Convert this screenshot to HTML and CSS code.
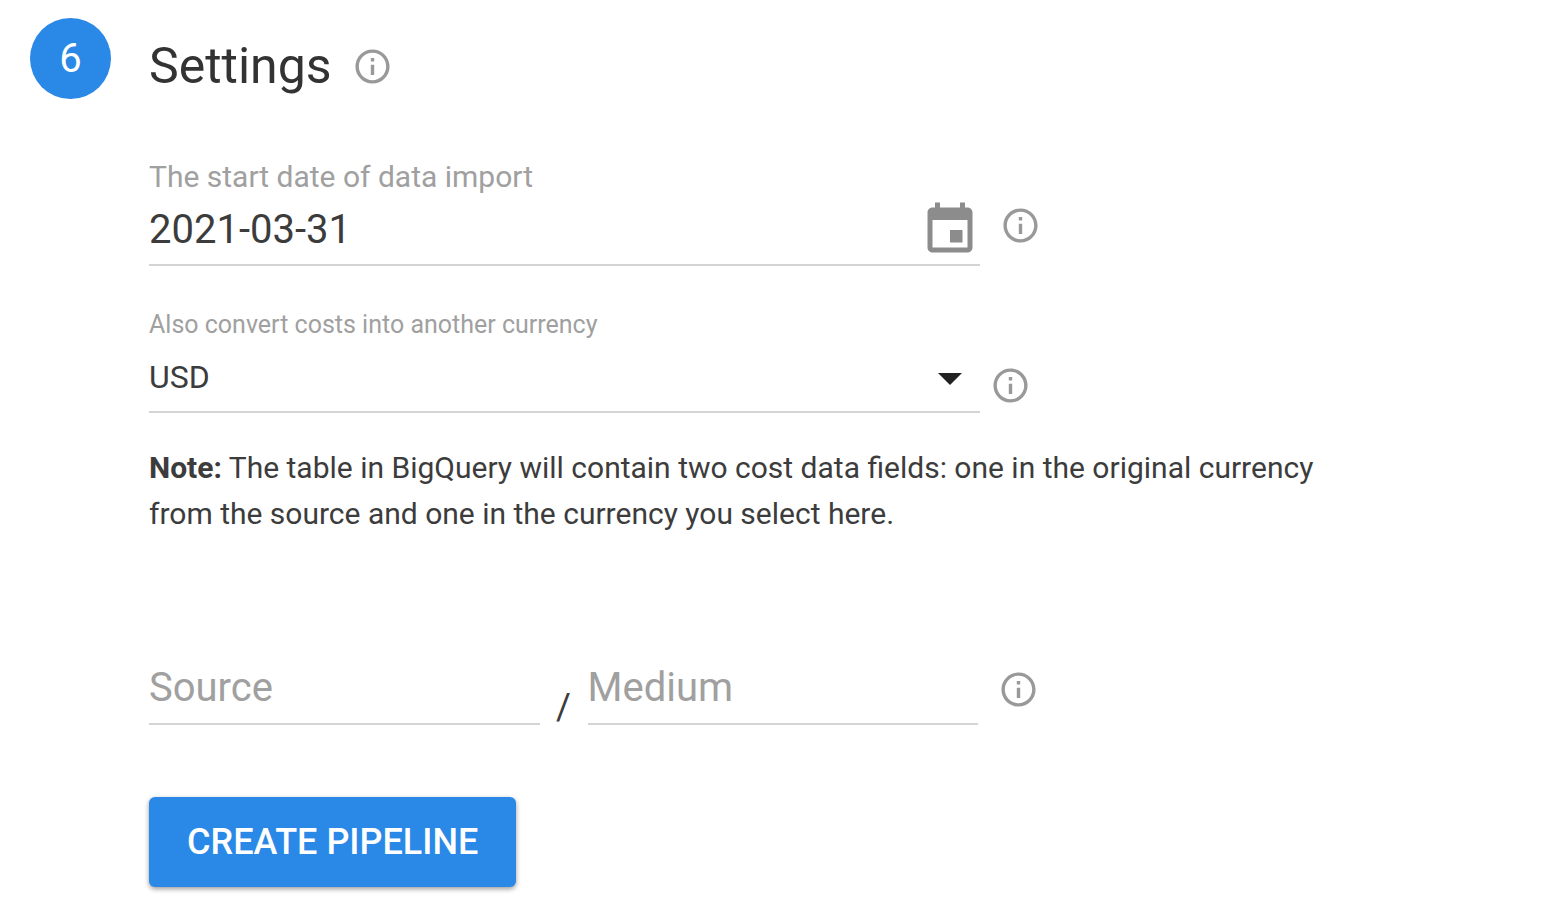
FILE: index.html
```html
<!DOCTYPE html>
<html lang="en">

<head>
    <meta charset="UTF-8">
    <meta name="viewport" content="width=device-width, initial-scale=1.0">
    <title>Settings</title>
    <link rel="stylesheet" href="styles.css">
</head>

<body>
    <!-- Shared info icon -->
    <svg class="symbols" aria-hidden="true">
        <symbol id="info" viewBox="0 0 24 24">
            <path d="M11 17h2v-6h-2v6zm1-15C6.48 2 2 6.48 2 12s4.48 10 10 10 10-4.48 10-10S17.52 2 12 2zm0 18c-4.41 0-8-3.59-8-8s3.59-8 8-8 8 3.59 8 8-3.59 8-8 8zM11 9h2V7h-2v2z" />
        </symbol>
    </svg>

    <main class="step">
        <div class="step-number">6</div>
        <form class="settings">
            <div class="title-row">
                <h2>Settings</h2>
                <button type="button" class="info-btn" aria-label="About settings"><svg><use href="#info" /></svg></button>
            </div>

            <div class="field-row date-row">
                <div class="field">
                    <label for="startDate">The start date of data import</label>
                    <div class="control">
                        <input type="text" id="startDate" name="startDate" value="2021-03-31">
                        <button type="button" class="calendar-btn" aria-label="Choose date">
                            <svg viewBox="0 0 24 24">
                                <path d="M17 12h-5v5h5v-5zM16 1v2H8V1H6v2H5c-1.11 0-1.99.9-1.99 2L3 19c0 1.1.89 2 2 2h14c1.1 0 2-.9 2-2V5c0-1.1-.9-2-2-2h-1V1h-2zm3 18H5V8h14v11z" />
                            </svg>
                        </button>
                    </div>
                </div>
                <button type="button" class="info-btn" aria-label="About the start date"><svg><use href="#info" /></svg></button>
            </div>

            <div class="field-row currency-row">
                <div class="field">
                    <label for="currency">Also convert costs into another currency</label>
                    <div class="control">
                        <select id="currency" name="currency">
                            <option>USD</option>
                        </select>
                        <svg class="arrow" viewBox="0 0 24 12"><path d="M0 0h24L12 12z" /></svg>
                    </div>
                </div>
                <button type="button" class="info-btn" aria-label="About currency"><svg><use href="#info" /></svg></button>
            </div>

            <p class="note"><strong>Note:</strong> The table in BigQuery will contain two cost data fields: one in the original currency from the source and one in the currency you select here.</p>

            <div class="field-row source-row">
                <div class="source-fields">
                    <input type="text" name="source" placeholder="Source" aria-label="Source">
                    <span class="slash">/</span>
                    <input type="text" name="medium" placeholder="Medium" aria-label="Medium">
                </div>
                <button type="button" class="info-btn" aria-label="About source and medium"><svg><use href="#info" /></svg></button>
            </div>

            <button type="submit" class="create-btn">CREATE PIPELINE</button>
        </form>
    </main>
</body>

</html>
```

FILE: styles.css
```css
* {
    box-sizing: border-box;
    margin: 0;
    padding: 0;
}

body {
    font-family: Roboto, sans-serif;
    background-color: #fff;
    color: #3c3c3c;
}

button, input, select {
    font-family: inherit;
    color: inherit;
    background: none;
    border: none;
    border-radius: 0;
    outline: none;
}

button {
    cursor: pointer;
}

svg {
    display: block;
    width: 100%;
    height: 100%;
}

.symbols {
    position: absolute;
    width: 0;
    height: 0;
}

.step {
    display: flex;
    align-items: flex-start;
    gap: 38px;
    padding: 18px 30px;
}

.step-number {
    flex: none;
    width: 81px;
    height: 81px;
    border-radius: 50%;
    background-color: #2a88e6;
    color: #fff;
    font-size: 40px;
    line-height: 82px;
    text-align: center;
}

.settings {
    flex: 1;
    max-width: 1200px;
}

.title-row {
    display: flex;
    align-items: center;
    gap: 20px;
    height: 96px;
}

h2 {
    font-size: 50px;
    font-weight: 400;
    color: #333;
}

.info-btn {
    flex: none;
    width: 41px;
    height: 41px;
    fill: #999;
}

.field-row {
    display: flex;
    align-items: flex-end;
}

.field {
    flex: 0 1 831px;
    border-bottom: 2px solid #d4d4d4;
}

label {
    display: block;
    line-height: 30px;
    color: #a0a0a0;
}

.control {
    display: flex;
    align-items: center;
    position: relative;
}

.control input, .control select {
    flex: 1;
    min-width: 0;
}

.date-row {
    margin-top: 48px;
    gap: 20px;
}

.date-row label {
    font-size: 30px;
}

.date-row .control {
    padding-top: 4px;
}

.date-row input {
    height: 68px;
    padding-bottom: 2px;
    font-size: 40px;
}

.calendar-btn {
    width: 60px;
    height: 60px;
    fill: #8c8c8c;
}

.date-row .info-btn {
    margin-bottom: 20px;
}

.currency-row {
    margin-top: 44px;
    gap: 10px;
}

.currency-row label {
    font-size: 25px;
}

.currency-row .control {
    padding-top: 6px;
}

.currency-row select {
    height: 65px;
    padding-bottom: 4px;
    font-size: 32px;
    appearance: none;
}

.arrow {
    position: absolute;
    right: 18px;
    width: 24px;
    height: 12px;
    fill: #222;
    pointer-events: none;
}

.currency-row .info-btn {
    margin-bottom: 7px;
}

.note {
    margin-top: 32px;
    font-size: 30px;
    line-height: 46px;
}

.source-row {
    margin-top: 114px;
    gap: 20px;
}

.source-fields {
    flex: 0 1 829px;
    min-width: 0;
    display: flex;
    align-items: flex-end;
}

.source-fields input {
    flex: 1;
    min-width: 0;
    height: 74px;
    border-bottom: 2px solid #d4d4d4;
    font-size: 40px;
}

.source-fields input::placeholder {
    color: #a0a0a0;
}

.slash {
    width: 48px;
    font-size: 36px;
    line-height: 36px;
    text-align: center;
}

.source-row .info-btn {
    margin-bottom: 15px;
}

.create-btn {
    margin-top: 72px;
    height: 90px;
    padding: 0 38px;
    border-radius: 6px;
    background-color: #2a88e6;
    box-shadow: 0 2px 5px rgba(0, 0, 0, 0.4);
    color: #fff;
    font-size: 36px;
    font-weight: 500;
}
```
